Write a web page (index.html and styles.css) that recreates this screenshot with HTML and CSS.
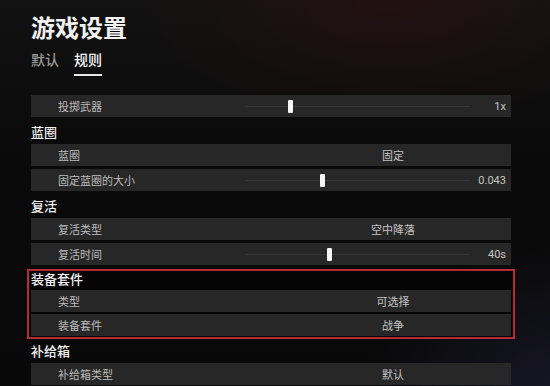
FILE: index.html
```html
<!DOCTYPE html>
<html lang="zh-CN">
<head>
<meta charset="utf-8">
<title>游戏设置</title>
<link rel="stylesheet" href="styles.css">
</head>
<body>
<div class="page">
  <h1 class="title">游戏设置</h1>
  <nav class="tabs">
    <span class="tab">默认</span>
    <span class="tab active">规则</span>
  </nav>
  <div class="list">
    <div class="row slider-row">
      <span class="label">投掷武器</span>
      <span class="track"><span class="thumb" style="left:20%"></span></span>
      <span class="num">1x</span>
    </div>

    <div class="section-title">蓝圈</div>
    <div class="row">
      <span class="label">蓝圈</span>
      <span class="value">固定</span>
    </div>
    <div class="row slider-row">
      <span class="label">固定蓝圈的大小</span>
      <span class="track"><span class="thumb" style="left:34%"></span></span>
      <span class="num">0.043</span>
    </div>

    <div class="section-title">复活</div>
    <div class="row">
      <span class="label">复活类型</span>
      <span class="value">空中降落</span>
    </div>
    <div class="row slider-row">
      <span class="label">复活时间</span>
      <span class="track"><span class="thumb" style="left:37.5%"></span></span>
      <span class="num">40s</span>
    </div>

    <div class="highlight">
      <div class="section-title inbox">装备套件</div>
      <div class="row">
        <span class="label">类型</span>
        <span class="value">可选择</span>
      </div>
      <div class="row">
        <span class="label">装备套件</span>
        <span class="value">战争</span>
      </div>
    </div>

    <div class="section-title after-box">补给箱</div>
    <div class="row">
      <span class="label">补给箱类型</span>
      <span class="value">默认</span>
    </div>
  </div>
</div>
</body>
</html>
```
FILE: styles.css
```css
html, body {
  margin: 0;
  padding: 0;
  height: 100%;
}
body {
  width: 550px;
  height: 386px;
  overflow: hidden;
  font-family: "Noto Sans CJK SC", "Noto Sans", sans-serif;
  color: #fff;
  background-color: #0a0a0a;
  background-image:
    radial-gradient(ellipse 260px 130px at 390px 0px, rgba(60, 16, 16, 0.4), rgba(60, 16, 16, 0) 100%),
    radial-gradient(ellipse 200px 160px at 560px 400px, rgba(40, 38, 70, 0.5), rgba(40, 38, 70, 0) 100%),
    linear-gradient(180deg, #121212 0%, #0a0a0a 40%, #080808 100%);
}
.page {
  padding: 14px 39px 0 31px;
}
.title {
  margin: 0;
  font-size: 24px;
  line-height: 26px;
  font-weight: 700;
  color: #f2f2f2;
}
.tabs {
  display: flex;
  gap: 15px;
  margin-top: 9px;
}
.tab {
  font-size: 14px;
  line-height: 20px;
  padding-bottom: 5px;
  color: #9a9a9a;
  font-weight: 500;
  border-bottom: 2px solid transparent;
}
.tab.active {
  color: #f4f4f4;
  border-bottom-color: #e8e8e8;
}
.list {
  margin-top: 19px;
  display: flex;
  flex-direction: column;
}
.row {
  display: grid;
  grid-template-columns: 244px 1fr;
  align-items: center;
  height: 22px;
  margin-top: 3px;
  background: #272727;
  font-size: 11px;
  color: #bcbcbc;
}
.list > .row:first-child {
  margin-top: 0;
}
.label {
  padding-left: 27px;
}
.value {
  text-align: center;
  color: #c4c4c4;
}
.slider-row {
  grid-template-columns: 214px 1fr 41px;
}
.track {
  position: relative;
  height: 1px;
  background: #363636;
}
.thumb {
  position: absolute;
  top: -6px;
  width: 5px;
  height: 13px;
  margin-left: -2px;
  border-radius: 1px;
  background: #f4f4f4;
}
.num {
  font-family: Roboto, "Noto Sans", sans-serif;
  font-size: 11px;
  text-align: right;
  padding-right: 5px;
  color: #c4c4c4;
}
.section-title {
  padding-top: 6px;
  line-height: 18px;
  font-size: 13px;
  font-weight: 500;
  color: #f0f0f0;
}
.highlight {
  margin: 4px -4px 0;
  padding: 0 2px 1px;
  border: 2px solid #b52b36;
  background: #050505;
  display: flex;
  flex-direction: column;
}
.section-title.inbox {
  padding-top: 0;
  line-height: 16px;
}
.highlight .row:nth-child(3) {
  margin-top: 2px;
}
.section-title.after-box {
  padding-top: 3px;
}
```
